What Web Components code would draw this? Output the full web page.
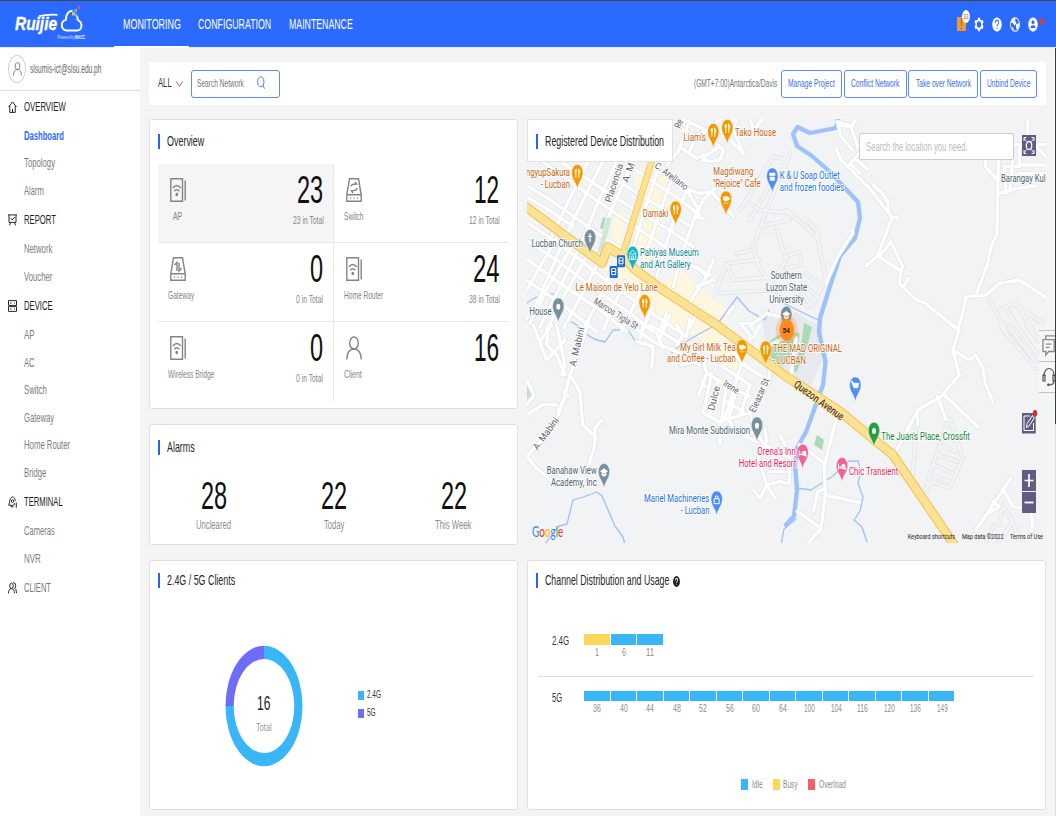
<!DOCTYPE html>
<html lang="en">
<head>
<meta charset="utf-8">
<title>Ruijie Cloud</title>
<style>
html,body{margin:0;height:100%}
body{font-family:"Liberation Sans",Arial,sans-serif;color:#262626;background:#f4f4f5;overflow:hidden}
</style>
</head>
<body>
<cloud-app></cloud-app>
<script>
const define = (name, html, setup) => customElements.define(name, class extends HTMLElement {
  constructor() {
    super();
    const root = this.attachShadow({ mode: 'open' });
    root.innerHTML = typeof html === 'function' ? html(this) : html;
    if (setup) setup(this, root);
  }
});
const T = (text, w, size, color = 'inherit', extra = '') =>
  `<fit-text w="${w}" size="${size}" style="color:${color};${extra}">${text}</fit-text>`;
const I = (name, w, h, extra = '') => `<ui-icon name="${name}" w="${w}" h="${h}" style="${extra}"></ui-icon>`;

/* ---------- shell ---------- */
define('cloud-app', `
<style>
:host{display:grid;grid-template:48px 768px / 140px 1fr;width:1056px;height:816px;position:relative;overflow:hidden}
top-bar{grid-column:1/3}
.scroll{position:absolute;right:0;top:48px;width:1px;height:376px;background:#3c3c3c}
.track{position:absolute;right:0;top:424px;width:1px;bottom:0;background:#dcdcdc}
.dock{position:absolute;right:1px;top:330px;width:16px;display:flex;flex-direction:column}
.dock div{height:30px;background:#f6f6f6;border-top:1px solid #c2c2c2;display:flex;align-items:center;padding-left:3px;overflow:hidden}
.dock div:last-child{border-bottom:1px solid #c2c2c2}
</style>
<top-bar></top-bar><side-nav></side-nav><main-view></main-view>
<div class="scroll"></div><div class="track"></div>
<div class="dock"><div>${I('chat',15,22)}</div><div>${I('headset',14,20)}</div></div>`);

/* ---------- header ---------- */
define('top-bar', `
<style>
:host{display:flex;height:47px;box-sizing:border-box;background:#2a6aff;border-top:1px solid #46464a;color:#fff;align-items:stretch;box-shadow:0 1px 0 #e4e8f3}
.logo{width:100px;padding-left:14px}
nav{display:flex;flex:1}
nav div{display:flex;align-items:center;box-sizing:border-box;height:46px;padding-top:1px}
nav .on{border-bottom:2px solid #fff;padding-top:2px;height:47px}
.tools{display:flex;align-items:center;gap:8px;padding-right:12px}
.alert{position:relative;display:flex}
.alert i{position:absolute;left:5px;top:-7px;width:8px;height:13px;border-radius:50%;background:#fff;display:flex;align-items:center;justify-content:center;font-style:normal}
</style>
<div class="logo"><svg width="74" height="46" viewBox="0 1 74 46">
<text x="1" y="29.500" font-family="Liberation Sans" font-size="17.500" font-weight="700" font-style="italic" textLength="42" lengthAdjust="spacingAndGlyphs" fill="#fff" stroke="#fff" stroke-width=".4">Ruijie</text>
<path d="M25 16.200q9-2.200 18.500-1.400" stroke="#fff" stroke-width="1.800" fill="none"/>
<path d="M54 30.500h-1.500c-3.300-.4-5-3-4.600-6c.3-2.600 2-4.200 3.900-4.600c0-5.500 3-9.400 6.800-9.200M54 30.500h9.500c2.600-.4 4.100-2.700 4-5.400c-.2-3.200-2.400-4.300-4-5.600c.2-1.500 0-2.500-.6-3.600" fill="none" stroke="#fff" stroke-width="1.900"/>
<path d="M58 12h3v3.500h-3z" fill="#f6b63a"/><path d="M60.500 9h2.500v3h-2.500zM61 13.500h2v3h-2z" fill="#4cc8e8"/><path d="M64 6h2.200v3.500h-2.200z" fill="#f0418c"/>
<text x="43.500" y="38.800" font-family="Liberation Sans" font-size="5.500" textLength="17" lengthAdjust="spacingAndGlyphs" fill="#dbe6ff">Powered by</text>
<text x="61" y="38.800" font-family="Liberation Sans" font-weight="700" font-size="5.500" textLength="10" lengthAdjust="spacingAndGlyphs" fill="#fff">MACC</text>
</svg></div>
<nav><div class="on" style="padding-left:8.500px;padding-right:8.500px">${T('MONITORING',58,14.5)}</div>
<div style="padding-left:8.500px">${T('CONFIGURATION',73.5,14.5)}</div><div style="padding-left:18px">${T('MAINTENANCE',64,14.5)}</div></nav>
<div class="tools"><span class="alert">${I('box',9,14)}<i>${T('33',5.5,7.5,'#cf4a5a')}</i></span>${I('gear',10,15)}${I('help',10,15)}${I('globe',10,15)}${I('user',10,15)}${I('dot',5,7,'margin:-6px 0 0 -6.5px')}</div>`);

/* ---------- sidebar ---------- */
const menu = [
  ['home','OVERVIEW',42,[['Dashboard',40],['Topology',31],['Alarm',20]]],
  ['report','REPORT',32,[['Network',28.5],['Voucher',28.5]]],
  ['device','DEVICE',28.5,[['AP',10.5],['AC',10.5],['Switch',22.5],['Gateway',30],['Home Router',46],['Bridge',22.5]]],
  ['terminal','TERMINAL',38.5,[['Cameras',31],['NVR',16.5]]],
  ['clients','CLIENT',27,[]]
];
define('side-nav', `
<style>
:host{display:block;background:#fff;height:768px}
.me{display:flex;align-items:center;height:43px;border-bottom:1px solid #dedede;box-sizing:border-box;padding-left:8px;gap:4px}
.av{width:16px;height:26px;border:1px solid #d2d2d2;border-radius:50%;display:flex;align-items:center;justify-content:center}
.h{display:flex;align-items:center;height:31px;padding-left:8px;gap:6px}
.h ui-icon{width:10px}
.h fit-text{margin-top:1px}
.i{display:flex;align-items:center;height:27.500px;padding-left:24px}
</style>
<div class="me"><span class="av">${I('person',9,14,'color:#666')}</span>${T('slsumis-ict@slsu.edu.ph',71.5,12.5,'#666','margin-left:-.5px')}</div>
${menu.map(([ic,t,w,items]) => `<div class="h">${I(ic,9,12)}${T(t,w,13.5,t==='CLIENT'?'#777':'#222')}</div>` +
  items.map(([n,iw]) => `<div class="i">${T(n,iw,13,n==='Dashboard'?'#2f6bff':'#7d7d7d',n==='Dashboard'?'font-weight:700':'')}</div>`).join('')).join('')}`);

/* ---------- main ---------- */
define('main-view', `
<style>
:host{display:flex;flex-direction:column;gap:14px;padding:14px 10px 0 9px;box-sizing:border-box}
.grid{display:grid;grid-template-columns:369px 519px;column-gap:9px}
.left{display:grid;grid-template-rows:290px 121px 250px;row-gap:15px}
.right{display:grid;grid-template-rows:424px 250px;row-gap:17px}
.low{--head-top:12px}
</style>
<tool-bar></tool-bar>
<div class="grid"><div class="left">
<dash-card><span slot="title">${T('Overview',37,14.5)}</span><overview-grid></overview-grid></dash-card>
<dash-card style="--head-top:15px"><span slot="title">${T('Alarms',27.5,14.5)}</span><alarm-row></alarm-row></dash-card>
<dash-card class="low"><span slot="title">${T('2.4G / 5G Clients',68,14.5)}</span><client-donut></client-donut></dash-card>
</div><div class="right"><device-map></device-map>
<dash-card class="low"><span slot="title" style="display:flex;align-items:center;gap:3px">${T('Channel Distribution and Usage',124.5,14.5)}${I('helpdark',7,11)}</span><channel-chart></channel-chart></dash-card>
</div></div>`);

define('tool-bar', `
<style>
:host{display:flex;align-items:center;height:43px;background:#fff;padding:0 9px;box-sizing:border-box}
.search{display:flex;align-items:center;box-sizing:border-box;width:89px;height:28px;border:1px solid #5b8af8;border-radius:3px;padding-left:5px;margin:0 auto 0 8.500px}
.btns{display:flex;gap:1.700px;margin-left:4px}
.btns div{display:flex;align-items:center;justify-content:center;height:28px;box-sizing:border-box;border:1px solid #5b8af8;border-radius:3px;background:#fff}
</style>
${T('ALL',13.5,12.5,'#333')}${I('chevron',7,6,'margin-left:4px;color:#777')}
<div class="search">${T('Search Network',47,11.5,'#777')}${I('search',8,13,'margin-left:13px;color:#4a80ff;margin-top:-3px')}</div>
${T('(GMT+7:00)Antarctica/Davis',83,11.5,'#777')}
<div class="btns"><div style="width:61px">${T('Manage Project',47,11.5,'#3a6cf0')}</div><div style="width:62.500px">${T('Conflict Network',48.5,11.5,'#3a6cf0')}</div><div style="width:70px">${T('Take over Network',55,11.5,'#3a6cf0')}</div><div style="width:57px">${T('Unbind Device',43.5,11.5,'#3a6cf0')}</div></div>`);

define('dash-card', `
<style>
:host{display:flex;flex-direction:column;box-sizing:border-box;background:#fff;border:1px solid #e0e0e0;border-radius:3px}
header{display:flex;align-items:center;height:15px;margin:var(--head-top,14px) 0 0 8px;border-left:2px solid #2463f5;padding-left:7px;color:#262626}
header ::slotted(span){padding-top:1px}
</style><header><slot name="title"></slot></header><slot></slot>`);

define('overview-grid', `
<style>:host{display:grid;grid-template:79px 79px 79px / 176px 175px;margin:15px 8px 0}</style>
${[['ap','AP',9,'23',26,'23 in Total',30.5],['switch','Switch',19.5,'12',25,'12 in Total',30.5],
['gateway','Gateway',26,'0',13,'0 in Total',27],['ap','Home Router',39,'24',26.5,'38 in Total',30.5],
['ap','Wireless Bridge',46.5,'0',13,'0 in Total',27],['person','Client',17.5,'16',25,'',0]].map((c,i) =>
`<stat-cell data-on="${i===0}" data-col="${i%2}" data-row="${i>>1}">${I(c[0],16,24,`color:#858585;margin:14px 0 0 ${i%2?11.500:12}px`)}
<span slot="label" style="margin-left:${i===0?15:i%2?9.500:10}px">${T(c[1],c[2],11.5,'#858585')}</span>
<span slot="num">${T(c[3],c[4],38,'#111')}</span><span slot="sub">${c[5]?T(c[5],c[6],11.5,'#858585'):''}</span></stat-cell>`).join('')}`);

define('stat-cell', `
<style>
:host{display:flex;justify-content:space-between;box-sizing:border-box;border-bottom:1px solid #e8e8e8;border-right:1px solid #e8e8e8}
:host([data-on="true"]){background:#f5f5f5}
:host([data-col="1"]){border-right:0}
:host([data-row="2"]){border-bottom:0}
.a,.b{display:flex;flex-direction:column}
.a ::slotted([slot=label]){margin-top:8px}
.b{align-items:flex-end;padding:4px 10px 0 0}
</style><div class="a"><slot></slot><slot name="label"></slot></div><div class="b"><slot name="num"></slot><slot name="sub"></slot></div>`);

define('alarm-row', `
<style>:host{display:grid;grid-template-columns:repeat(3,120px);margin:19px 0 0 3.500px}
div{display:flex;flex-direction:column;align-items:center}</style>
${[['28','Uncleared',35],['22','Today',20],['22','This Week',36.5]].map(a=>`<div>${T(a[0],26,38,'#111')}${T(a[1],a[2],12.5,'#8c8c8c','margin-top:-2px')}</div>`).join('')}`);

define('client-donut', `
<style>:host{display:flex;margin:57px 0 0 75px;align-items:flex-start}
.ring{position:relative;width:78px;height:122px}
.mid{position:absolute;inset:0;display:flex;flex-direction:column;align-items:center;padding-top:46px;box-sizing:border-box;gap:5px}
ul{list-style:none;margin:42.500px 0 0 55px;padding:0;display:flex;flex-direction:column;gap:5px}
li{display:flex;align-items:center;gap:2.500px;height:13.500px}
li fit-text{margin-top:1px}
li i{width:6px;height:9px;margin-top:2px}</style>
<div class="ring"><svg width="78" height="122" viewBox="-39 -61 78 122">
<path d="M0-60.200A38.500 60.200 0 1 1-38.500 0H-30.300A30.300 47 0 1 0 0-47Z" fill="#38b6f8"/>
<path d="M-38.500 0A38.500 60.200 0 0 1 0-60.200V-47A30.300 47 0 0 0-30.300 0Z" fill="#6e6df8"/></svg>
<div class="mid">${T('16',13.5,20.5,'#222')}${T('Total',15.5,11.5,'#999','margin-left:-1px')}</div></div>
<ul><li><i style="background:#38b6f8"></i>${T('2.4G',14,11.5,'#333')}</li><li><i style="background:#6e6df8"></i>${T('5G',8.5,11.5,'#333')}</li></ul>`);

const band = (label, w, chans) => `<div class="band"><span class="l">${T(label,w,12,'#333')}</span>${chans.map((c,i)=>
  `<span class="c"><i class="${label==='2.4G'&&!i?'busy':''}"></i>${T(c,c.length===1?4:c.length===2?8:11,10.5,'#8c8c8c')}</span>`).join('')}</div>`;
define('channel-chart', `
<style>:host{display:flex;flex-direction:column;margin:0 11px 0 10px}
.band{display:flex;height:24px}
.band:first-of-type{margin-top:46px;height:42px;border-bottom:1px solid #dedede}
.band:nth-of-type(2){margin-top:14px}
.l{width:32.500px;padding-left:13.500px;margin-top:-.500px}
.c{width:26.540px;display:flex;flex-direction:column;align-items:center;gap:1.500px}
.c i{align-self:stretch;height:10.500px;margin-right:1px;background:#38b6f8}
.c i.busy{background:#ffd65c}
.leg{display:flex;margin:62px 0 0 203px;align-items:center}
.leg i{width:7px;height:11px;margin-right:3.500px}</style>
${band('2.4G',17,['1','6','11'])}
${band('5G',10,['36','40','44','48','52','56','60','64','100','104','116','120','136','149'])}
<div class="leg"><i style="background:#38b6f8"></i>${T('Idle',11,11.5,'#8c8c8c','margin-top:1px')}<i style="background:#ffd65c;margin-left:10px"></i>${T('Busy',15,11.5,'#8c8c8c','margin-top:1px')}<i style="background:#f75e63;margin-left:10px"></i>${T('Overload',27,11.5,'#8c8c8c','margin-top:1px')}</div>`);

/* ---------- map ---------- */
/* Four drawing tiles, each at three units per pixel. */
const tiles = { A:[520,110], B:[786,110], C:[520,325], D:[786,325] };
const tile = (k, body) => `<g transform="translate(${tiles[k]}) scale(.33333)">${body}</g>`;
const streets = {
A:[ 'M250 150L165 320 110 440 60 560 18 630','M205 150L140 285 85 400','M292 150L235 275 190 385 165 440 60 650','M340 150L262 330 235 445',
'M18 225L80 262 160 318 235 372 300 412','M60 150L200 250 290 312 420 400 490 455 570 495','M130 160L270 252 330 290 440 355 520 410',
'M270 200L345 245 505 345','M330 170L385 205 470 262 540 315','M18 260L70 290 160 350','M420 160L385 265 340 410 325 445',
'M462 190L425 290 375 440 360 475','M500 240L455 350 410 500','M535 290L490 420 460 530','M390 170L450 200 510 245',
'M18 335L150 425 250 505 360 585 440 640 500 680','M18 390L110 450 220 535 330 610 400 665','M18 445L120 520 240 600 320 665','M18 510L100 565 180 625 230 665',
'M230 465L190 545 130 655','M200 440L130 560 80 660','M155 410L90 520 30 640','M110 385L60 470 18 545','M270 490L235 570 190 660','M315 515L280 590 250 660','M360 545L330 610 305 665','M400 590L365 660','M440 610L420 660','M540 590L510 650',
'M510 26L475 125 440 165','M478 110L530 145 550 135','M490 60L530 80 560 60 600 30','M530 80L505 130','M600 110L560 135 548 150 575 155 600 150 610 120 570 80 560 60 480 26','M600 60L640 100 670 130 640 60 650 26','M640 26L620 60','M690 26L700 60 730 26',
'M510 240L540 250 575 245 640 320','M575 245L610 205 620 180','M575 245L550 270 525 320 550 325','M500 240L530 290',
'M560 500L520 560 500 600','M580 450L560 500 530 470','M530 530L580 510','M640 590L625 610','M660 640L700 640 740 610 800 625','M690 640L700 660' ],
B:[ 'M155 36L165 80 200 120','M155 36L200 48 208 26','M165 46L195 50 215 110','M150 115L165 150 185 170 250 235 318 322 335 324','M185 170L225 125','M205 145L245 178','M192 160L222 190','M318 322L275 438 240 468','M262 225L290 250 305 275 308 305','M275 438L345 483 350 470 315 395 282 438','M345 483L340 520 390 570 415 578 515 658','M352 530L368 505',
'M120 520L155 440 200 370 198 358','M515 658L530 610 540 560 600 555 640 520 700 510 780 562','M572 550L605 460 615 410 633 370 637 150','M637 250L690 235 750 228','M725 26L725 75','M683 104H780M745 165H780M700 165H740M745 104L780 140','M700 110V170L655 170 660 250M680 150L672 242M700 190L780 190','M600 150L598 170 635 210' ],
C:[ 'M205 -10L180 75 150 150 135 210 115 270 80 330 20 395','M150 150L180 200 188 300 225 335 222 370 205 425','M225 340L225 310 245 285','M20 270L70 238 110 240M20 395L50 430 110 480','M115 255L140 210M130 200L145 212','M40 0L80 105 135 45','M85 0L80 60 110 90M60 50L95 0','M110 90L135 150M18 160L42 210 20 240','M110 0L135 120 125 150',
'M330 0L400 50 470 80 540 120','M390 0L480 55M470 0L490 30 470 60','M350 50L400 65 395 125M410 25L430 70M450 -30L420 40','M380 -15L360 40M510 -20L500 30',
'M485 120L550 105 560 145 620 180 690 215','M560 145L535 210M545 170L555 185','M575 145L550 265 600 290 690 262 748 170 748 120','M595 165L570 265M620 175L605 285','M650 95L690 130 720 150','M625 60L665 115 700 140 740 160','M665 115L615 280','M600 120L690 180','M620 230L670 260M650 190L625 285M690 180L660 270','M665 0L690 30 690 70M720 0L700 40','M690 262L705 320 735 360 810 400M705 320L670 330 710 350M735 310L740 350','M600 290V355M630 290L640 310','M735 360L715 400 740 480 780 470 810 475','M740 480L720 520 700 495M740 480L765 520M750 440L810 440M780 330L800 370'],
D:[ 'M495 0L520 15 500 75 520 150 465 215 395 255 330 380','M500 75L550 105 570 90 590 130 598 175 620 230','M455 215L480 285M475 210L575 305','M395 255V300','M150 285L115 420 118 510 105 610 70 650','M115 415L70 380 40 360M118 510L220 532','M105 610L35 560M118 490L95 500 82 560','M0 475L10 475 10 430 0 420','M675 460L570 615M650 490L680 545 730 550 740 590 735 620','M620 530L640 545 600 570','M30 40L15 150' ]};
const campus = {
A:['M810 130L740 300 700 410 715 470 780 560','M660 300L760 140 800 150','M690 330L770 190 810 220','M680 275L720 300 810 310','M720 350L810 330M590 540L620 460 720 450','M620 460L640 510 780 500','M600 550L760 540M650 430L700 420M770 360L800 450 740 540'],
B:['M0 300L60 350 95 385 105 440 120 500 80 590 40 540','M68 335L90 360 98 385','M0 440L40 425 45 465 0 475M60 490L110 530M50 520L95 560M0 180L18 210M90 560L65 590 30 560','M605 560L660 660M640 600L680 580 770 640M660 590L700 660M690 580L740 660'],
C:['M748 60L790 40'],
D:['M420 500L430 450 490 280M490 280L505 320 520 370 530 400 490 490 440 470M470 330L505 345M460 360L510 380M455 390L515 410M445 420L500 445M440 450L490 470M380 450L385 390 390 300M410 500L440 470','M640 0L750 130M665 0L755 120M690 0L755 90M720 0L760 50','M640 600L650 540 680 590 640 650M600 650L625 600M680 590L700 650']};
const stroke = (set, color, w) => Object.entries(set).map(([k,ds]) => tile(k, ds.map(d=>`<path d="${d}"/>`).join(''))).join('')
  .replace(/<g /g, `<g fill="none" stroke="${color}" stroke-width="${w}" stroke-linecap="round" stroke-linejoin="round" `);
const glyph = {
  fork:'<path d="M-2-20v3M-1-20v3M-2.500-17.500h2M-1.500-17.500v6M1.500-20.500v9M1-20.500c2 2 2 4 .5 5" stroke="#fff" fill="none"/>',
  cup:'<path d="M-2.500-19h4.500v3q-2 3-4.500 0zM2-18h1.500v2h-1.500M-2.500-12.500h5" fill="#fff" stroke="#fff" stroke-width=".6"/>',
  dot:'<ellipse cy="-16" rx="2" ry="3" fill="#fff"/>',
  cross:'<path d="M0-21v9M-2-18h4" stroke="#fff" stroke-width="1.200"/>',
  shop:'<path d="M-3-20h6v3h-6zM-2.500-16h5v4h-5z" fill="#fff"/>',
  art:'<path d="M-3.500-17L0-21 3.500-17zM-3-16v4M3-16v4M-3.500-11.500h7M-1-15h2v3h-2z" stroke="#fff" stroke-width=".8" fill="none"/>',
  cap:'<path d="M-4-17L0-20 4-17 0-14zM-2.500-15v2l2.500 1.500 2.500-1.500v-2" fill="#fff"/>',
  lock:'<path d="M-2.500-17h5v5h-5zM-1.200-17v-2.500h2.400v2.500" stroke="#fff" stroke-width="1" fill="none"/>',
  cart:'<path d="M-4-20.500h1.300l.6 2h5.600l-1 4.500h-4zM-1.500-12.500h1M1.500-12.500h1" stroke="#fff" stroke-width=".7" fill="#fff"/>',
  bed:'<path d="M-3.500-19v6.500M-3.500-14.500h7v2M-2.500-16h1.500M0-17.500h3v2h-3z" stroke="#fff" stroke-width=".9" fill="#fff"/>' };
const OR='#f29900', GY='#78909c', BL='#4c8df6', PK='#f06292';
const pins = [[713.3,148.3,OR,'fork'],[727.3,144.3,OR,'fork'],[577.3,189.3,OR,'fork'],[675.7,225.7,OR,'fork'],[726,215.7,OR,'cup'],[772.3,192.7,BL,'shop'],
[590,254.3,GY,'cross'],[632.7,271,'#12b5cb','art'],[644.7,319.3,OR,'fork'],[558.3,322.7,GY,'dot'],[786.3,331,GY,'cap'],[742,364.3,OR,'cup'],[765.7,365.7,OR,'fork'],
[757,441.7,GY,'dot'],[604,488.3,GY,'cap'],[716.7,515.7,BL,'lock'],[855.3,401.7,BL,'cart'],[874,447,'#24a148','dot'],[802.7,469,PK,'bed'],[842,482.3,PK,'bed']];
const o='#c8640f', s='#4a626d', b='#1a73e8', t='#0b8390', p='#e91e63', g='#188038', r='#5f6368';
const labels = [["Liam's",683.3,140.7,22.7,o],['Tako House',735,136,41,o],['ngyupSakura',526,176,44,o],['- Lucban',540.7,187.7,29.3,o],['Magdiwang',713.3,175,40,o],['"Rejoice" Cafe',712.7,186.7,48,o],
['Damaki',642.7,216.7,25.6,o],['Lucban Church',531.5,247,51.5,s],['Pahiyas Museum',640,256.3,58.7,t],['and Art Gallery',640,268,50.5,t],['Le Maison de Yelo Lane',575.6,290.6,82,o],['House',529.5,314.5,22,s],
['K &amp; U Soap Outlet',779.7,178.6,60,b],['and frozen foodies',779.7,190.5,64.5,b],['Barangay Kul',1001,182,44.5,s],['Southern',770.7,279,31,s],['Luzon State',766,291,41.3,s],['University',769.3,303,34.5,s],
['My Girl Milk Tea',680,350.5,55.7,o],['and Coffee - Lucban',667,362,68.7,o],['THE MAD ORIGINAL',773,352,69,o],['- LUCBAN',773,364,33,o],['Mira Monte Subdivision',669,433.5,81,s],["Orena's Inn",757.3,455.2,38.5,p],['Hotel and Resort',738.7,467,57.5,p],
['Banahaw View',546.7,474,50,s],['Academy, Inc',551,485.8,45.7,s],['Mariel Machineries',644,501.7,65.3,b],['- Lucban',680.7,513.5,28.7,b],["The Juan's Place, Crossfit",881.3,439.5,88.5,g],['Chic Transient',849,474.5,49.3,p],
['Re',680,129,9,r,-68],['Placencia',611,203,40,r,-72],['A. M',628,183,20,r,-70],['C. Arellano',654,167,39,r,37],['Marcos Tigla St',593,303,50,r,32],['Dulce',714,411,25,r,-76],['Irene',722.5,385,17,r,33],['Eleazar St',755,413,36,r,-66],
['A. Mabini',575.5,367,40,r,-77],['A. Mabini',537.5,450.5,37,r,-54]];
const label = ([tx,x,y,w,c,rot]) => `<text x="${x}" y="${y}" textLength="${w}" lengthAdjust="spacingAndGlyphs" font-size="${rot?9.5:11.5}" fill="${c}"${rot?` transform="rotate(${rot} ${x} ${y})"`:''}>${tx}</text>`;
const main = 'M520 202.500L602 263 608 247 623 256.500 635 269.500 660 288 716.700 325 786 376.500 838 410 893 455 957 549';
const branch = 'M622 257L652 160';
const river = 'M838 119.500L836 128 810 133 797.500 127 793 134 797 146 812 156 829 171 858 202 860 218 855 238 840 256 832 280 820 318 819 332 825.500 362 823 385 806 432 797 448 795 465 797 490 794 516 786 525';

define('device-map', `
<style>
:host{display:block;position:relative;width:519px;height:424px;overflow:hidden;background:#f1f3f4}
svg{display:block}
.title{position:absolute;left:0;top:0;width:146px;height:43px;box-sizing:border-box;background:#fff;border:1px solid #e2e2e2;display:flex;align-items:center}
.title span{display:flex;align-items:center;height:15px;border-left:2px solid #2463f5;margin:2px 0 0 8px;padding-left:7px}
.find{position:absolute;left:332px;top:14px;width:155px;height:27px;box-sizing:border-box;border:1px solid #ccc;border-radius:2px;background:#fff;display:flex;align-items:center;padding-left:6px}
.brand{position:absolute;left:4.500px;top:402px;font-family:Lato,sans-serif;font-weight:500;text-shadow:0 0 1px #fff}
ui-icon{position:absolute}
</style>
<svg width="519" height="424" viewBox="527 119 519 424" font-family="Roboto">
<g fill="#fef7e0"><path d="M634 172L652 165 672 183 657 240 646 270 628 252 640 210z"/><path d="M612 222l8-12 6 4-8 38-8-4z"/><path d="M604 268l20-6 30 25 62 40 18 25 14 36-14-14-34-36-40-20-40-30z"/><path d="M680 268l30 28 20 16-6 18-36-24-30-20z"/></g>
<path d="M762 319L795 312 822 328 822 360 808 392 786 372 768 358z" fill="#e6e9ed"/>
<g fill="#a8dab5"><path d="M603 217l4 2-3 11-4-2zM804 323l8 4-6 24-10 22-4-6 9-20zM817 435l7 5-2 10-8-5z"/><path d="M770 341q16-14 30-7l-5 24-14 8-12-10z"/><path d="M527 382l5 13-5 5z" opacity=".7"/></g>
<g fill="none" stroke="#9cc1fb" stroke-linecap="round" stroke-linejoin="round">
<path d="${river}" stroke-width="4.300"/>
<g stroke-width="1.300"><path d="M527 303q12-10 30-9M571 322c10 3 14 15 26 18l8 2 8-12 15 0 8 12M719 322l18-25 12 14 16 9 4-10M785 304l33 16M720 323q-40 20-48 30"/><path d="M544 545l15-19 8-2 6-24 10-3 14-5 5 4 13 30 8 11 2 8M781 545l3-16 12-10M797 488l14 2 22-14 8-8 8-7 9 0 3 10-3 12 5 14-3 14-6 9 8 7 5 15"/></g></g>
${stroke(campus,'#dfe2e5',13)}${stroke(campus,'#f1f3f4',9)}
${stroke(streets,'#e0e3e6',14)}${stroke(streets,'#ffffff',10)}
<path d="M609 218l-9 36" stroke="#cfe8d5" stroke-width="5"/>
<g fill="none" stroke-linejoin="round"><path d="${main}" stroke="#f3c04e" stroke-width="9.500"/><path d="${branch}" stroke="#f3c04e" stroke-width="6.500"/><path d="${main}" stroke="#fde293" stroke-width="7.500"/><path d="${branch}" stroke="#fde293" stroke-width="5"/></g>
${[[621,261.3],[613.7,272]].map(([x,y])=>`<g transform="translate(${x} ${y})"><rect x="-4" y="-6" width="8" height="12" rx="1" fill="#1967d2"/><path d="M-2-3.500h4v6h-4zM-2-.5h4M-1.500 4h.5M1 4h.5" stroke="#fff" fill="none"/></g>`).join('')}
${pins.map(([x,y,c,k])=>`<g transform="translate(${x} ${y})"><path d="M0 0C-.8-7-5.700-10-5.700-16.500a5.700 8.300 0 0 1 11.400 0C5.700-10 .8-7 0 0z" fill="${c}" stroke="#fff" stroke-width=".4"/>${glyph[k]}</g>`).join('')}
<g fill="#ff8a1f"><ellipse cx="786.800" cy="330" rx="11" ry="15" opacity=".25"/><ellipse cx="786.800" cy="330" rx="7.300" ry="11"/></g>
<text x="782.800" y="333" font-size="8" font-weight="700" font-family="Liberation Sans" fill="#222" textLength="7" lengthAdjust="spacingAndGlyphs">54</text>
<g stroke="#fff" stroke-width="1.800" paint-order="stroke" stroke-linejoin="round">${labels.map(label).join('')}
<text x="793" y="386" textLength="59" lengthAdjust="spacingAndGlyphs" font-size="11" fill="#5b4022" stroke="#fde9b0" transform="rotate(36 793 386)" font-weight="500">Quezon Avenue</text></g>
<g font-size="8" fill="#222"><text x="907.700" y="539.300" textLength="47.500" lengthAdjust="spacingAndGlyphs">Keyboard shortcuts</text><text x="962" y="539.300" textLength="41.500" lengthAdjust="spacingAndGlyphs">Map data ©2022</text><text x="1010" y="539.300" textLength="33" lengthAdjust="spacingAndGlyphs">Terms of Use</text></g>
</svg>
<fit-text class="brand" w="31" size="16"><b style="font-weight:inherit;color:#4285f4">G</b><b style="font-weight:inherit;color:#ea4335">o</b><b style="font-weight:inherit;color:#fbbc04">o</b><b style="font-weight:inherit;color:#4285f4">g</b><b style="font-weight:inherit;color:#34a853">l</b><b style="font-weight:inherit;color:#ea4335">e</b></fit-text>
<div class="title"><span>${T('Registered Device Distribution',119,14.5)}</span></div>
<div class="find">${T('Search the location you need.',101.5,12.5,'#bdbdbd','margin-top:1px')}</div>
${I('full',14,21,'left:495px;top:16px')}${I('edit',16,24,'left:495px;top:291px')}${I('plus',14,21,'left:495px;top:351px')}${I('minus',14,21,'left:495px;top:373px')}`);

/* ---------- icons ---------- */
const C='fill="none" stroke="currentColor" vector-effect="non-scaling-stroke"';
const D='fill="none" stroke="currentColor" stroke-width="1.400"';
const icons = {
chat:['16 24',`<path d="M4 5V1h13v15h-3M1 5h12v13H7l-3 4v-4H1zM4 10h6M4 13.500h4" fill="none" stroke="#8a8a8a" stroke-width="1.400"/>`],
headset:['14 20',`<path d="M2 9C2-1 12-1 12 9M1 8h2v6H1zM11 8h2v6h-2zM12 14q0 4-5 4" fill="none" stroke="#555" stroke-width="1.200"/><ellipse cx="6.500" cy="17.800" rx="1.500" ry="1.200" fill="#555"/>`],
box:['9 14',`<rect width="9" height="14" rx="1" fill="#ea9a3a"/><path d="M4.500 1v8M4.500 10.500v2" stroke="#c0660c" stroke-width="1.200"/>`],
gear:['20 20',`<path d="M8 1h4l.6 2.500 2 1.100 2.500-.8 2 3.400-1.900 1.800v2l1.900 1.800-2 3.400-2.500-.8-2 1.100L12 19H8l-.6-2.500-2-1.100-2.500.8-2-3.400L2.800 11V9L.9 7.200l2-3.400 2.500.8 2-1.100z" fill="#fff"/><circle cx="10" cy="10" r="4.200" fill="#2a6aff"/>`],
help:['20 20',`<circle cx="10" cy="10" r="9.500" fill="#fff"/><path d="M6.500 8c0-5 7-4.500 7-.8 0 2.500-3.300 2.500-3.300 5.300M10.200 14v2" stroke="#2a6aff" stroke-width="1.700" fill="none"/>`],
helpdark:['20 20',`<circle cx="10" cy="10" r="9.800" fill="#1f1f1f"/><path d="M6.500 8c0-5 7-4.500 7-.8 0 2.500-3.300 2.500-3.300 5.300M10.200 14v2" stroke="#fff" stroke-width="2" fill="none"/>`],
globe:['20 20',`<circle cx="10" cy="10" r="9" fill="#2a6aff" stroke="#fff" stroke-width="1.500"/><path d="M2 5q4-4 9-4l-1 4 3 3-4 4-2-3-5-2zM12 10l5-2 2 3-4 6-3-2zM3 12l4 3 1 4q-4-2-5-7z" fill="#fff"/>`],
user:['20 20',`<circle cx="10" cy="10" r="9.500" fill="#fff"/><circle cx="10" cy="7" r="2.800" fill="#2a6aff"/><path d="M5 14.500q0-3.500 5-3.500t5 3.500z" fill="#2a6aff"/>`],
dot:['10 10',`<circle cx="5" cy="5" r="4.600" fill="#dc3a3a"/>`],
person:['16 24',`<ellipse cx="8" cy="7" rx="4.300" ry="6" ${D}/><path d="M.8 23.500C1 16.500 4 13 8 13s7 3.500 7.200 10.500" ${D}/>`],
home:['18 20',`<path d="M1 10L9 1.500 17 10M3.500 8v11h11V8M9 13v6" ${C}/>`],
report:['18 20',`<path d="M0 1.500h18M2 1.500v12.500h14V1.500M5.500 7l3 3 5-5M5 14l-2 5M13 14l2 5" ${C}/>`],
device:['18 20',`<path d="M1 1h16v8H1zM1 11h16v8H1zM4 5h3M4 15h3M12 5h2M12 15h2" ${C}/>`],
terminal:['18 20',`<path d="M9 1.500C5 2 3.500 6 3.500 9L1.500 15.500h10M9 1.500c4 .5 5.500 4 5.500 7M16.500 11v8.500M12.500 15v-3M5 18h6" ${C}/><circle cx="9" cy="8.500" r="2.300" ${C}/>`],
clients:['18 20',`<ellipse cx="7" cy="6.500" rx="3.500" ry="4.500" ${C}/><path d="M1 19c0-5 2-8 6-8s5.500 3 6 8M10 1.500c6-2 7 7 3 9 3 1 4 4 4 8" ${C}/>`],
chevron:['10 6',`<path d="M.5.500L5 5.300 9.500.500" ${C}/>`],
search:['18 20',`<ellipse cx="8.500" cy="9" rx="7" ry="7.500" ${C}/><path d="M13 14.500l4 5" ${C}/>`],
ap:['16 24',`<path d="M.8.800h11.700v22.400H.8z" ${D}/><path d="M15.200 2.500v20" ${D}/><path d="M2.800 10q4-5 8 0M4.300 13.200q2.500-3 5 0" ${D}/><ellipse cx="6.800" cy="16.500" rx="1.400" ry="1.800" fill="currentColor"/>`],
switch:['16 24',`<path d="M3.500.800h9l2.700 16v6.400H.8v-6.400zM.8 16.800h14.400" ${D}/><path d="M5 8.500q0-2.500 5.500-2.500L9 4M11 10q0 2.800-5.500 2.800L7 15M4 20h1M7.500 20h1M11 20h1" ${D}/>`],
gateway:['16 24',`<path d="M3.500.800h9l2.700 16v6.400H.8v-6.400zM.8 16.800h14.400" ${D}/><path d="M4.500 8L7 5.500V14M9 5.500V14l2.500-3M4 20h1M7.500 20h1M11 20h1" ${D}/>`],
full:['14 21',`<rect width="14" height="21" fill="#5f5d83"/><path d="M2 6V2.500h2.500M9.500 2.500H12V6M12 15v3.500H9.500M4.500 18.500H2V15M2 3l2.500 3.500M12 3L9.500 6.500M2 18l2.500-3.500M12 18l-2.500-3.500" stroke="#fff" fill="none" stroke-width=".9"/><ellipse cx="7" cy="10.500" rx="2.700" ry="4" fill="none" stroke="#fff" stroke-width="1.300"/>`],
edit:['16 24',`<rect y="3" width="13.700" height="20.500" fill="#5f5d83"/><path d="M8 6H2v14.500h9.500V13M4.500 17.500l.6-4L10.500 5.500l1.800 2.500L7 16z" stroke="#fff" fill="none"/><ellipse cx="13" cy="3.200" rx="2.200" ry="3.200" fill="#e02b20"/>`],
plus:['14 21',`<rect width="14" height="21" fill="#5f5d83"/><path d="M2.500 10.500h9M7 4v13" stroke="#fff" stroke-width="1.700"/>`],
minus:['14 21',`<rect width="14" height="21" fill="#5f5d83"/><path d="M2.500 10.500h9" stroke="#fff" stroke-width="1.800"/>`]
};
customElements.define('ui-icon', class extends HTMLElement {
  connectedCallback() {
    if (this.shadowRoot) return;
    const [box, body] = icons[this.getAttribute('name')];
    this.attachShadow({ mode: 'open' }).innerHTML = `<style>:host{display:block;flex:none}svg{display:block}</style>
      <svg width="${this.getAttribute('w')}" height="${this.getAttribute('h')}" viewBox="0 0 ${box}" preserveAspectRatio="none">${body}</svg>`;
  }
});

/* Condensed single-line text: scales its glyphs horizontally to the width in "w". */
customElements.define('fit-text', class extends HTMLElement {
  connectedCallback() {
    if (this.shadowRoot) return;
    const w = +this.getAttribute('w'), size = +this.getAttribute('size');
    const root = this.attachShadow({ mode: 'open' });
    root.innerHTML = `<style>:host{display:block;flex:none;width:${w}px;height:${size * 1.2}px;font-size:${size}px;line-height:${size * 1.2}px;white-space:nowrap}
      span{display:inline-block;vertical-align:top;transform-origin:0 0}</style><span><slot></slot></span>`;
    const span = root.querySelector('span');
    span.style.transform = `scaleX(${w / span.offsetWidth})`;
  }
});
</script>
</body>
</html>
